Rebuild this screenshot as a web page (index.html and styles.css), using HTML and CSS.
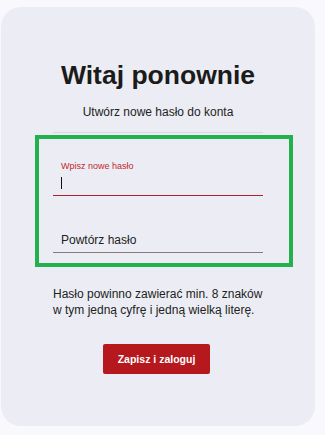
FILE: index.html
```html
<!DOCTYPE html>
<html lang="pl">
<head>
    <meta charset="UTF-8">
    <meta name="viewport" content="width=device-width, initial-scale=1.0">
    <title>Witaj ponownie</title>
    <link rel="stylesheet" href="styles.css">
</head>
<body>

    <div class="card">
        <h1>Witaj ponownie</h1>
        <p class="subtitle">Utwórz nowe hasło do konta</p>
        <div class="divider"></div>

        <div class="highlight">
            <div class="field active">
                <span class="field-label">Wpisz nowe hasło</span>
                <span class="caret"></span>
            </div>
            <div class="field">
                <span class="placeholder">Powtórz hasło</span>
            </div>
        </div>

        <p class="hint">Hasło powinno zawierać min. 8 znaków<br>w tym jedną cyfrę i jedną wielką literę.</p>

        <button class="btn">Zapisz i zaloguj</button>
    </div>

</body>
</html>
```

FILE: styles.css
```css
/* strona resetu hasła */
body {
    margin: 0;
    background-color: #f9f8fd;
    font-family: "Liberation Sans", Arial, sans-serif;
    color: #222;
}

.card {
    margin: 7px 0 0 1px;
    width: 314px;
    height: 419px;
    box-sizing: border-box;
    padding-top: 53px;
    border-radius: 20px;
    background-color: #ecedf4;
    display: flex;
    flex-direction: column;
    align-items: center;
}

h1 {
    margin: 0;
    font-size: 26.5px;
    line-height: 30px;
    font-weight: bold;
    color: #1b1b1b;
}

.subtitle {
    margin: 14px 0 0;
    font-size: 12px;
    line-height: 16px;
}

.divider {
    margin-top: 12px;
    width: 210px;
    height: 1px;
    background-color: #d6d7df;
}

/* zielona ramka wokół pól */
.highlight {
    align-self: flex-start;
    margin: 2px 0 0 34px;
    width: 258px;
    height: 132px;
    box-sizing: border-box;
    border: 4px solid #22b14c;
    padding: 22px 0 0 14px;
}

.field {
    width: 210px;
    box-sizing: border-box;
    padding: 0 0 4px 8px;
    border-bottom: 1px solid #857a7d;
}

.field.active {
    padding-bottom: 6px;
    border-bottom-color: #b0232a;
}

.field + .field {
    margin-top: 36px;
}

.field-label {
    display: block;
    font-size: 9px;
    line-height: 11px;
    color: #c1272d;
}

.caret {
    display: block;
    margin-top: 5px;
    width: 1px;
    height: 12px;
    background-color: #111;
}

.placeholder {
    display: block;
    font-size: 12px;
    line-height: 16px;
    color: #222;
}

.hint {
    margin: 19px 0 0;
    width: 210px;
    font-size: 12px;
    line-height: 16px;
}

.btn {
    margin: 26px 3px 0 0;
    width: 107px;
    height: 30px;
    border: none;
    border-radius: 2px;
    background-color: #b5191e;
    color: #fff;
    font-family: "Liberation Sans", Arial, sans-serif;
    font-size: 10.5px;
    font-weight: bold;
    cursor: pointer;
}
```
